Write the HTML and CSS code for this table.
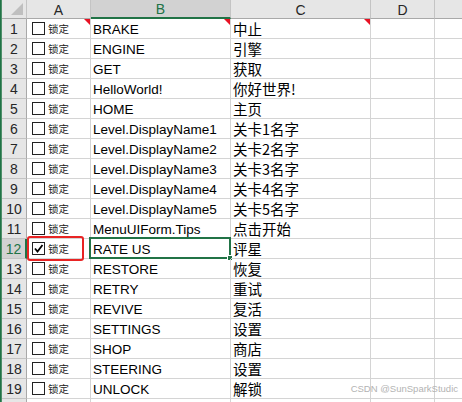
FILE: index.html
```html
<!DOCTYPE html>
<html>
<head>
<meta charset="utf-8">
<link rel="stylesheet" href="styles.css">
</head>
<body>
<div class="sheet">
  <div class="edge"></div>
  <div class="grid" id="grid">
    <div class="hd corner"><span class="tri"></span></div>
    <div class="hd col">A</div>
    <div class="hd col sel">B</div>
    <div class="hd col">C</div>
    <div class="hd col">D</div>
    <div class="hd col last"></div>

    <div class="rh">1</div>
    <div class="cell a"><span class="cb"></span><span class="lk">锁定</span><span class="note"></span></div>
    <div class="cell b">BRAKE<span class="note"></span></div>
    <div class="cell c">中止<span class="note"></span></div>
    <div class="cell"></div><div class="cell last"></div>

    <div class="rh">2</div>
    <div class="cell a"><span class="cb"></span><span class="lk">锁定</span></div>
    <div class="cell b">ENGINE</div><div class="cell c">引擎</div>
    <div class="cell"></div><div class="cell last"></div>

    <div class="rh">3</div>
    <div class="cell a"><span class="cb"></span><span class="lk">锁定</span></div>
    <div class="cell b">GET</div><div class="cell c">获取</div>
    <div class="cell"></div><div class="cell last"></div>

    <div class="rh">4</div>
    <div class="cell a"><span class="cb"></span><span class="lk">锁定</span></div>
    <div class="cell b">HelloWorld!</div><div class="cell c">你好世界!</div>
    <div class="cell"></div><div class="cell last"></div>

    <div class="rh">5</div>
    <div class="cell a"><span class="cb"></span><span class="lk">锁定</span></div>
    <div class="cell b">HOME</div><div class="cell c">主页</div>
    <div class="cell"></div><div class="cell last"></div>

    <div class="rh">6</div>
    <div class="cell a"><span class="cb"></span><span class="lk">锁定</span></div>
    <div class="cell b">Level.DisplayName1</div><div class="cell c">关卡1名字</div>
    <div class="cell"></div><div class="cell last"></div>

    <div class="rh">7</div>
    <div class="cell a"><span class="cb"></span><span class="lk">锁定</span></div>
    <div class="cell b">Level.DisplayName2</div><div class="cell c">关卡2名字</div>
    <div class="cell"></div><div class="cell last"></div>

    <div class="rh">8</div>
    <div class="cell a"><span class="cb"></span><span class="lk">锁定</span></div>
    <div class="cell b">Level.DisplayName3</div><div class="cell c">关卡3名字</div>
    <div class="cell"></div><div class="cell last"></div>

    <div class="rh">9</div>
    <div class="cell a"><span class="cb"></span><span class="lk">锁定</span></div>
    <div class="cell b">Level.DisplayName4</div><div class="cell c">关卡4名字</div>
    <div class="cell"></div><div class="cell last"></div>

    <div class="rh">10</div>
    <div class="cell a"><span class="cb"></span><span class="lk">锁定</span></div>
    <div class="cell b">Level.DisplayName5</div><div class="cell c">关卡5名字</div>
    <div class="cell"></div><div class="cell last"></div>

    <div class="rh">11</div>
    <div class="cell a"><span class="cb"></span><span class="lk">锁定</span></div>
    <div class="cell b">MenuUIForm.Tips</div><div class="cell c">点击开始</div>
    <div class="cell"></div><div class="cell last"></div>

    <div class="rh sel">12</div>
    <div class="cell a"><span class="cb checked"><svg width="11" height="11" viewBox="0 0 11 11"><path d="M2 5.5 L4.5 8.5 L9.5 2" fill="none" stroke="#000" stroke-width="1.8"/></svg></span><span class="lk">锁定</span><span class="mark"></span></div>
    <div class="cell b active">RATE US<span class="focus"><span class="handle"></span></span></div>
    <div class="cell c">评星</div>
    <div class="cell"></div><div class="cell last"></div>

    <div class="rh">13</div>
    <div class="cell a"><span class="cb"></span><span class="lk">锁定</span></div>
    <div class="cell b">RESTORE</div><div class="cell c">恢复</div>
    <div class="cell"></div><div class="cell last"></div>

    <div class="rh">14</div>
    <div class="cell a"><span class="cb"></span><span class="lk">锁定</span></div>
    <div class="cell b">RETRY</div><div class="cell c">重试</div>
    <div class="cell"></div><div class="cell last"></div>

    <div class="rh">15</div>
    <div class="cell a"><span class="cb"></span><span class="lk">锁定</span></div>
    <div class="cell b">REVIVE</div><div class="cell c">复活</div>
    <div class="cell"></div><div class="cell last"></div>

    <div class="rh">16</div>
    <div class="cell a"><span class="cb"></span><span class="lk">锁定</span></div>
    <div class="cell b">SETTINGS</div><div class="cell c">设置</div>
    <div class="cell"></div><div class="cell last"></div>

    <div class="rh">17</div>
    <div class="cell a"><span class="cb"></span><span class="lk">锁定</span></div>
    <div class="cell b">SHOP</div><div class="cell c">商店</div>
    <div class="cell"></div><div class="cell last"></div>

    <div class="rh">18</div>
    <div class="cell a"><span class="cb"></span><span class="lk">锁定</span></div>
    <div class="cell b">STEERING</div><div class="cell c">设置</div>
    <div class="cell"></div><div class="cell last"></div>

    <div class="rh">19</div>
    <div class="cell a"><span class="cb"></span><span class="lk">锁定</span></div>
    <div class="cell b">UNLOCK</div><div class="cell c">解锁</div>
    <div class="cell"></div><div class="cell last"></div>

    <div class="rh"></div>
    <div class="cell a"></div><div class="cell b"></div><div class="cell c"></div>
    <div class="cell"></div><div class="cell last"></div>
  </div>
  <div class="watermark">CSDN @SunSparkStudic</div>
</div>
</body>
</html>
```

FILE: styles.css
```css
* { box-sizing: border-box; }
html, body { margin: 0; padding: 0; background: #fff; overflow: hidden; }
body { width: 462px; height: 402px; }

.sheet {
  position: relative;
  display: flex;
  width: 462px;
  height: 402px;
  overflow: hidden;
  font-family: "Liberation Sans", Arial, sans-serif;
}
.edge { width: 2px; flex: none; background: #217346; border-right: 1px solid #4d8f69; }

.grid {
  display: grid;
  grid-template-columns: 25px 64px 140px 140px 64px 40px;
  grid-template-rows: 19px repeat(20, 20px);
}

.hd {
  background: #e6e6e6;
  border-right: 1px solid #c4c4c4;
  border-bottom: 1px solid #a9a9a9;
  font-size: 14px;
  color: #262626;
  display: flex;
  align-items: center;
  justify-content: center;
  padding-top: 1px;
}
.hd.sel { background: #d2d2d2; border-bottom: 2px solid #217346; color: #217346; }
.hd.last { border-right: none; }
.corner { position: relative; }
.tri {
  position: absolute;
  right: 3px; bottom: 3px;
  width: 0; height: 0;
  border-left: 12px solid transparent;
  border-bottom: 12px solid #bfbfbf;
}

.rh {
  background: #e6e6e6;
  border-right: 1px solid #a9a9a9;
  border-bottom: 1px solid #c4c4c4;
  font-size: 14px;
  color: #262626;
  display: flex;
  align-items: center;
  justify-content: center;
}
.rh.sel { background: #d2d2d2; color: #217346; border-right: 2px solid #217346; }

.cell {
  position: relative;
  border-right: 1px solid #d4d4d4;
  border-bottom: 1px solid #d4d4d4;
  font-size: 13.5px;
  color: #000;
  display: flex;
  align-items: center;
  white-space: nowrap;
}
.cell.last { border-right: none; }
.cell.b { padding-left: 2px; padding-top: 1px; }
.cell.c {
  padding-left: 2px;
  font-family: "Noto Sans CJK SC", "Liberation Sans", sans-serif;
  font-size: 14.5px;
}
.cell.a { padding-left: 5px; }

.cb {
  width: 13px; height: 13px;
  border: 1px solid #222;
  background: #fff;
  flex: none;
  display: flex;
  align-items: center;
  justify-content: center;
}
.lk {
  margin-left: 3px;
  font-family: "Noto Sans CJK SC", sans-serif;
  font-size: 10.5px;
  color: #222;
}

.note {
  position: absolute;
  top: 0; right: 0;
  width: 0; height: 0;
  border-left: 6px solid transparent;
  border-top: 6px solid #e81123;
}

.mark {
  position: absolute;
  left: 0; top: -3px;
  width: 57px; height: 25px;
  border: 2.5px solid #e82424;
  border-radius: 3px;
}

.focus {
  position: absolute;
  left: -2px; top: -2px; right: -1px; bottom: -1px;
  border: 2px solid #217346;
}
.handle {
  position: absolute;
  right: -4px; bottom: -4px;
  width: 6px; height: 6px;
  background: #217346;
  border: 1px solid #fff;
}

.watermark {
  position: absolute;
  right: 4px; bottom: 8px;
  font-size: 9.5px;
  color: #b3b3b3;
  font-family: "Liberation Sans", Arial, sans-serif;
}
```
